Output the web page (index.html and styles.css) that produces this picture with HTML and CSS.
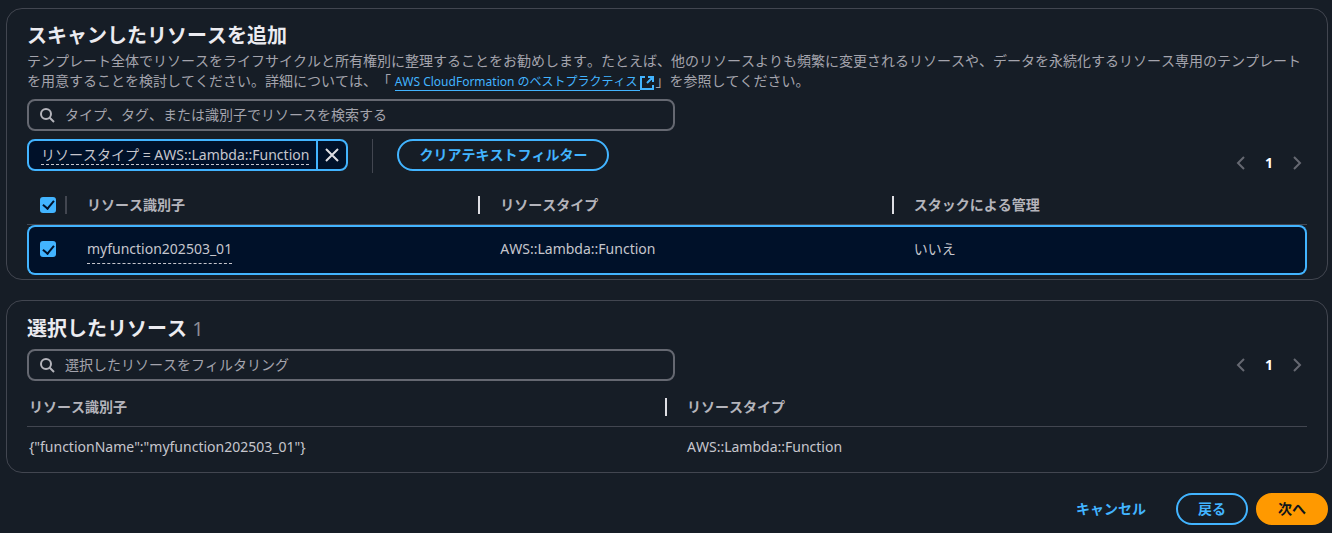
FILE: index.html
```html
<!DOCTYPE html>
<html lang="ja">
<head>
<meta charset="utf-8">
<title>スキャンしたリソースを追加</title>
<link rel="stylesheet" href="styles.css">
</head>
<body>
<main class="page">
  <section class="card card-scan">
    <h2 class="title">スキャンしたリソースを追加</h2>
    <p class="description">テンプレート全体でリソースをライフサイクルと所有権別に整理することをお勧めします。たとえば、他のリソースよりも頻繁に変更されるリソースや、データを永続化するリソース専用のテンプレートを用意することを検討してください。詳細については、「 <a class="link" href="#"><span class="link-text">AWS CloudFormation のベストプラクティス</span><svg class="link-icon" viewBox="0 0 16 16" aria-hidden="true"><path d="M5 2H1v12h12v-4M8 2h5v5M13 2 7 8"/></svg></a>」を参照してください。</p>
    <label class="search">
      <svg class="search-icon" viewBox="0 0 16 16" aria-hidden="true"><circle cx="7" cy="7" r="5"/><path d="m10.500 10.500 4.500 4.500"/></svg>
      <input class="search-input" type="text" aria-label="リソースを検索" placeholder="タイプ、タグ、または識別子でリソースを検索する">
    </label>
    <div class="toolbar">
      <div class="filters">
        <div class="token">
          <button class="token-label" type="button"><span class="dashed">リソースタイプ = AWS::Lambda::Function</span></button>
          <button class="token-remove" type="button" aria-label="フィルターを削除"><svg viewBox="0 0 16 16" aria-hidden="true"><path d="m2 2 12 12M14 2 2 14"/></svg></button>
        </div>
        <span class="separator"></span>
        <button class="button" type="button">クリアテキストフィルター</button>
      </div>
      <nav class="pagination" aria-label="スキャンしたリソースのページ">
        <button class="page-arrow" type="button" aria-label="前のページ"><svg viewBox="0 0 16 16" aria-hidden="true"><path d="m11 2-6 6 6 6"/></svg></button>
        <button class="page-number" type="button">1</button>
        <button class="page-arrow" type="button" aria-label="次のページ"><svg viewBox="0 0 16 16" aria-hidden="true"><path d="m5 2 6 6-6 6"/></svg></button>
      </nav>
    </div>
    <table class="table table-scan">
      <thead>
        <tr>
          <th class="check-cell"><div class="head muted"><input class="checkbox" type="checkbox" aria-label="すべて選択" checked></div></th>
          <th><div class="head">リソース識別子</div></th>
          <th><div class="head">リソースタイプ</div></th>
          <th><div class="head last">スタックによる管理</div></th>
        </tr>
      </thead>
      <tbody>
        <tr>
          <td class="check-cell"><input class="checkbox" type="checkbox" aria-label="myfunction202503_01 を選択" checked></td>
          <td><button class="identifier" type="button">myfunction202503_01</button></td>
          <td>AWS::Lambda::Function</td>
          <td>いいえ</td>
        </tr>
      </tbody>
    </table>
  </section>

  <section class="card card-selected">
    <h2 class="title">選択したリソース <span class="count">1</span></h2>
    <div class="toolbar">
      <label class="search">
        <svg class="search-icon" viewBox="0 0 16 16" aria-hidden="true"><circle cx="7" cy="7" r="5"/><path d="m10.500 10.500 4.500 4.500"/></svg>
        <input class="search-input" type="text" aria-label="選択したリソースを検索" placeholder="選択したリソースをフィルタリング">
      </label>
      <nav class="pagination centered" aria-label="選択したリソースのページ">
        <button class="page-arrow" type="button" aria-label="前のページ"><svg viewBox="0 0 16 16" aria-hidden="true"><path d="m11 2-6 6 6 6"/></svg></button>
        <button class="page-number" type="button">1</button>
        <button class="page-arrow" type="button" aria-label="次のページ"><svg viewBox="0 0 16 16" aria-hidden="true"><path d="m5 2 6 6-6 6"/></svg></button>
      </nav>
    </div>
    <table class="table table-selected">
      <thead>
        <tr>
          <th><div class="head">リソース識別子</div></th>
          <th><div class="head last">リソースタイプ</div></th>
        </tr>
      </thead>
      <tbody>
        <tr>
          <td>{"functionName":"myfunction202503_01"}</td>
          <td>AWS::Lambda::Function</td>
        </tr>
      </tbody>
    </table>
  </section>

  <footer class="actions">
    <button class="button plain" type="button">キャンセル</button>
    <button class="button" type="button">戻る</button>
    <button class="button primary" type="button">次へ</button>
  </footer>
</main>
</body>
</html>
```

FILE: styles.css
```css
* {
  box-sizing: border-box;
}

body {
  margin: 0;
  background: #161d26;
  color: #c6c6cd;
  font: 14px/20px "Noto Sans", "Noto Sans CJK JP", sans-serif;
  font-kerning: none;
  text-spacing-trim: space-all;
}

button,
input {
  font: inherit;
  color: inherit;
}

button {
  margin: 0;
  padding: 0;
  border: 0;
  background: none;
  cursor: pointer;
}

svg {
  display: block;
  width: 16px;
  height: 16px;
  fill: none;
  stroke: currentColor;
  stroke-width: 2;
}

.page {
  padding: 8px 4px 8px 6px;
}

.card {
  padding: 14px 20px 0;
  border: 1px solid #424650;
  border-radius: 16px;
}

.card-scan {
  margin-bottom: 20px;
  padding-top: 13px;
  padding-bottom: 4px;
}

.title {
  margin: 0 0 1px;
  color: #ebebf0;
  font-size: 20px;
  line-height: 28px;
  font-weight: 700;
}

.count {
  color: #8c8c94;
  font-weight: 400;
}

.description {
  margin: 0 0 7px;
  color: #a4a4ad;
}

.link {
  color: #42b4ff;
  font-size: 12px;
  text-decoration: none;
}

.link-text {
  padding-right: 2px;
  border-bottom: 1px solid;
}

.link-icon {
  display: inline-block;
  vertical-align: middle;
}

.search {
  display: flex;
  align-items: center;
  gap: 10px;
  width: 648px;
  height: 32px;
  padding: 0 10px;
  border: 2px solid #656871;
  border-radius: 8px;
}

.search-icon {
  flex: none;
  color: #b4b4bb;
}

.search-input {
  flex: 1;
  min-width: 0;
  padding: 0;
  border: 0;
  outline: 0;
  background: none;
}

.search-input::placeholder {
  color: #a4a4ad;
  opacity: 1;
}

.toolbar {
  display: flex;
  justify-content: space-between;
}

.card-scan .toolbar {
  padding-top: 8px;
}

.filters {
  display: flex;
}

.token {
  display: flex;
  height: 32px;
  overflow: hidden;
  border: 2px solid #42b4ff;
  border-radius: 8px;
  background: #001129;
}

.token-label {
  padding: 0 7px 0 12px;
}

.dashed {
  border-bottom: 1px dashed;
}

.token-remove {
  display: grid;
  place-items: center;
  width: 30px;
  border-left: 2px solid #42b4ff;
  color: #dedee3;
}

.separator {
  width: 1px;
  height: 34px;
  margin: 0 24px;
  background: #424650;
}

.button {
  min-width: 72px;
  height: 32px;
  padding: 0 20px;
  border: 2px solid #42b4ff;
  border-radius: 16px;
  color: #42b4ff;
  font-weight: 700;
}

.button.plain {
  border-color: transparent;
}

.button.primary {
  border-color: #ff9900;
  background: #ff9900;
  color: #0f141a;
}

.pagination {
  display: flex;
  align-items: center;
  align-self: flex-end;
  gap: 8px;
  height: 20px;
  padding-right: 2px;
}

.pagination.centered {
  align-self: center;
}

.page-arrow {
  color: #656871;
}

.page-number {
  width: 24px;
  color: #fff;
  font-weight: 700;
}

.table {
  width: 100%;
  table-layout: fixed;
  border-spacing: 0;
}

th,
td {
  padding: 0;
  text-align: left;
}

th {
  border-bottom: 1px solid #424650;
  color: #b4b4bb;
}

td {
  padding-left: 20px;
}

.head {
  display: flex;
  align-items: center;
  height: 18px;
  padding-left: 20px;
  border-right: 2px solid #dedee3;
}

.head.muted {
  border-color: #424650;
}

.head.last {
  border-right: 0;
}

.check-cell {
  width: 40px;
}

.check-cell,
.check-cell .head {
  padding-left: 13px;
}

th.check-cell {
  padding-left: 0;
}

.table-scan th {
  height: 52px;
  padding-top: 12px;
}

.table-scan td {
  height: 50px;
  padding-bottom: 2px;
  border: solid #42b4ff;
  border-width: 2px 0;
  background: #001129;
}

.table-scan td:first-child {
  padding-left: 11px;
  border-left-width: 2px;
  border-radius: 8px 0 0 8px;
}

.table-scan td:last-child {
  border-right-width: 2px;
  border-radius: 0 8px 8px 0;
}

.checkbox {
  display: grid;
  place-content: center;
  flex: none;
  appearance: none;
  width: 16px;
  height: 16px;
  margin: 0;
  border-radius: 3px;
  background: #42b4ff;
}

.checkbox:checked::before {
  content: "";
  width: 5px;
  height: 9px;
  margin-bottom: 2px;
  border: solid #001129;
  border-width: 0 2px 2px 0;
  rotate: 40deg;
}

.identifier {
  display: block;
  padding-top: 4px;
  padding-bottom: 4px;
  border-bottom: 1px dashed;
}

.card-selected .title {
  margin-bottom: 6px;
}

.table-selected th {
  height: 46px;
  padding-top: 6px;
}

.table-selected td {
  height: 45px;
  padding-bottom: 6px;
}

.table-selected th:first-child .head,
.table-selected td:first-child {
  padding-left: 2px;
}

.actions {
  display: flex;
  justify-content: flex-end;
  gap: 8px;
  padding-top: 20px;
}
```
